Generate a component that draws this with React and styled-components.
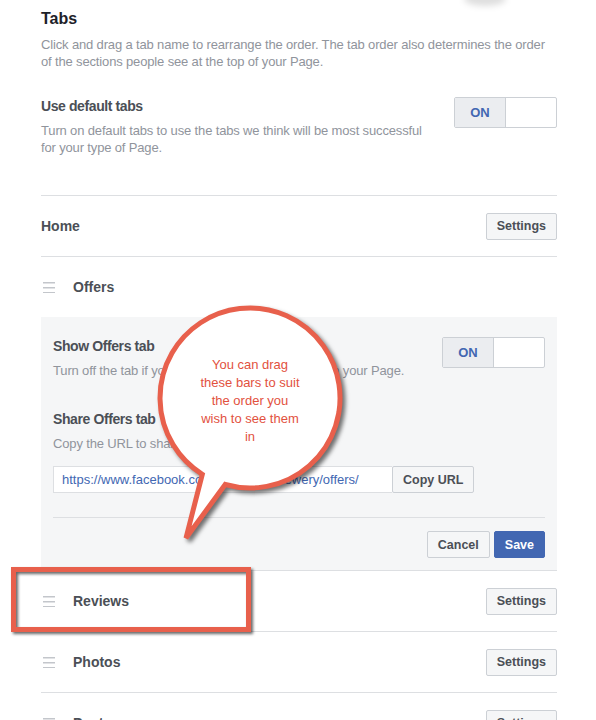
import React from 'react'
import styled, { createGlobalStyle } from 'styled-components'

const GlobalStyle = createGlobalStyle`
  html, body {
    margin: 0;
    padding: 0;
    background: #fff;
  }
  body {
    font-family: "Liberation Sans", Helvetica, Arial, sans-serif;
    color: #1d2129;
  }
  * {
    box-sizing: border-box;
  }
`

const tabs = ['Reviews', 'Photos', 'Posts', 'Events']

function App() {
  return (
    <Page>
      <GlobalStyle />
      <TopShadow />

      <Title>Tabs</Title>
      <Desc>
        Click and drag a tab name to rearrange the order. The tab order also determines the order
        of the sections people see at the top of your Page.
      </Desc>

      <ToggleRow>
        <TextBlock>
          <SubTitle>Use default tabs</SubTitle>
          <Desc $narrow>
            Turn on default tabs to use the tabs we think will be most successful for your type of Page.
          </Desc>
        </TextBlock>
        <Toggle>
          <ToggleOn>ON</ToggleOn>
          <ToggleOff />
        </Toggle>
      </ToggleRow>

      <TabList>
        <Row>
          <RowLabel>Home</RowLabel>
          <Button>Settings</Button>
        </Row>

        <Row>
          <RowLabel>
            <Handle />
            Offers
          </RowLabel>
        </Row>
        <Panel>
          <ToggleRow $flush>
            <TextBlock>
              <SubTitle>Show Offers tab</SubTitle>
              <Desc>Turn off the tab if you don't want people to see it on your Page.</Desc>
            </TextBlock>
            <Toggle>
              <ToggleOn>ON</ToggleOn>
              <ToggleOff />
            </Toggle>
          </ToggleRow>

          <ShareBlock>
            <SubTitle>Share Offers tab</SubTitle>
            <Desc>Copy the URL to share your Offers tab directly.</Desc>
            <InputRow>
              <UrlField readOnly value="https://www.facebook.com/lakeshorebrewery/offers/" />
              <Button>Copy URL</Button>
            </InputRow>
          </ShareBlock>

          <PanelDivider />
          <Actions>
            <Button>Cancel</Button>
            <Button $primary>Save</Button>
          </Actions>
        </Panel>

        {tabs.map((t) => (
          <Row key={t}>
            <RowLabel>
              <Handle />
              {t}
            </RowLabel>
            <Button>Settings</Button>
          </Row>
        ))}
      </TabList>

      {/* annotation overlays */}
      <Bubble width="210" height="250" viewBox="0 0 210 250">
        <path
          d="M75.2 184.5 L36 238 L52.3 174.3 A90 90 0 1 1 75.2 184.5 Z"
          fill="#fff"
          stroke="#e8604c"
          strokeWidth="5"
          strokeLinejoin="miter"
        />
      </Bubble>
      <BubbleText>
        You can drag<br />
        these bars to suit<br />
        the order you<br />
        wish to see them<br />
        in
      </BubbleText>
      <Highlight />
    </Page>
  )
}

export default App

const Page = styled.div`
  position: relative;
  width: 596px;
  padding: 9px 39px 0 41px;
  overflow: hidden;
`

const TopShadow = styled.span`
  position: absolute;
  top: -8px;
  left: 464px;
  width: 42px;
  height: 14px;
  border-radius: 50%;
  background: rgba(0, 0, 0, 0.13);
  filter: blur(3px);
`

const Title = styled.div`
  font-size: 16px;
  line-height: 20px;
  font-weight: bold;
  color: #1d2129;
`

const Desc = styled.div`
  margin-top: 6.5px;
  font-size: 13px;
  line-height: 17px;
  letter-spacing: -0.15px;
  color: #90949c;
  max-width: ${(p) => (p.$narrow ? '390px' : 'none')};
`

const ToggleRow = styled.div`
  display: flex;
  justify-content: space-between;
  align-items: flex-start;
  margin-top: ${(p) => (p.$flush ? '0' : '27.5px')};
`

const TextBlock = styled.div`
  display: flex;
  flex-direction: column;
`

const SubTitle = styled.div`
  font-size: 14px;
  line-height: 18px;
  font-weight: bold;
  letter-spacing: -0.4px;
  color: #4b4f56;
`

const Toggle = styled.div`
  display: flex;
  width: 103px;
  height: 31px;
  border: 1px solid #ccd0d5;
  border-radius: 2px;
  background: #fff;
  overflow: hidden;
  flex-shrink: 0;
`

const ToggleOn = styled.span`
  width: 51px;
  display: flex;
  align-items: center;
  justify-content: center;
  background: #ebedf0;
  border-right: 1px solid #ccd0d5;
  color: #4267b2;
  font-size: 13px;
  font-weight: bold;
`

const ToggleOff = styled.span`
  flex: 1;
`

const TabList = styled.div`
  margin-top: 39.5px;
`

const Row = styled.div`
  display: flex;
  align-items: center;
  justify-content: space-between;
  height: 61px;
  border-top: 1px solid #dddfe2;
`

const RowLabel = styled.div`
  display: flex;
  align-items: center;
  font-size: 14px;
  font-weight: bold;
  color: #4b4f56;
`

const Handle = styled.span`
  width: 12px;
  height: 12px;
  margin: 0 18px 0 2px;
  background:
    linear-gradient(#c3c6cb, #c3c6cb) 0 1px / 100% 1.5px no-repeat,
    linear-gradient(#c3c6cb, #c3c6cb) 0 6px / 100% 1.5px no-repeat,
    linear-gradient(#c3c6cb, #c3c6cb) 0 11px / 100% 1.5px no-repeat;
`

const Button = styled.button`
  height: 27px;
  padding: 0 10px;
  border: 1px solid ${(p) => (p.$primary ? '#4267b2' : '#ccd0d5')};
  border-radius: 2px;
  background: ${(p) => (p.$primary ? '#4267b2' : '#f5f6f7')};
  color: ${(p) => (p.$primary ? '#fff' : '#4b4f56')};
  font-family: "Liberation Sans", Helvetica, Arial, sans-serif;
  font-size: 12.5px;
  font-weight: bold;
  white-space: nowrap;
  flex-shrink: 0;
`

const Panel = styled.div`
  background: #f5f6f7;
  padding: 20px 12px 12px;
`

const ShareBlock = styled.div`
  margin-top: 31.5px;
`

const InputRow = styled.div`
  display: flex;
  margin-top: 14.5px;
`

const UrlField = styled.input`
  width: 339px;
  height: 27px;
  padding: 0 8px;
  border: 1px solid #dddfe2;
  border-right: none;
  background: #fff;
  color: #4267b2;
  font-family: "Liberation Sans", Helvetica, Arial, sans-serif;
  font-size: 13px;
  outline: none;
`

const PanelDivider = styled.div`
  margin-top: 24px;
  border-top: 1px solid #dddfe2;
`

const Actions = styled.div`
  display: flex;
  justify-content: flex-end;
  gap: 4px;
  margin-top: 13px;
`

const Bubble = styled.svg`
  position: absolute;
  left: 150px;
  top: 300px;
  overflow: visible;
  filter: drop-shadow(3px 3px 2px rgba(0, 0, 0, 0.55));
`

const BubbleText = styled.div`
  position: absolute;
  left: 180px;
  top: 356px;
  width: 140px;
  text-align: center;
  font-size: 13px;
  line-height: 18px;
  color: #e2513e;
`

const Highlight = styled.div`
  position: absolute;
  left: 11px;
  top: 567px;
  width: 240px;
  height: 65px;
  border: 5px solid #e8604c;
  filter: drop-shadow(2px 2px 1.5px rgba(0, 0, 0, 0.6));
`
